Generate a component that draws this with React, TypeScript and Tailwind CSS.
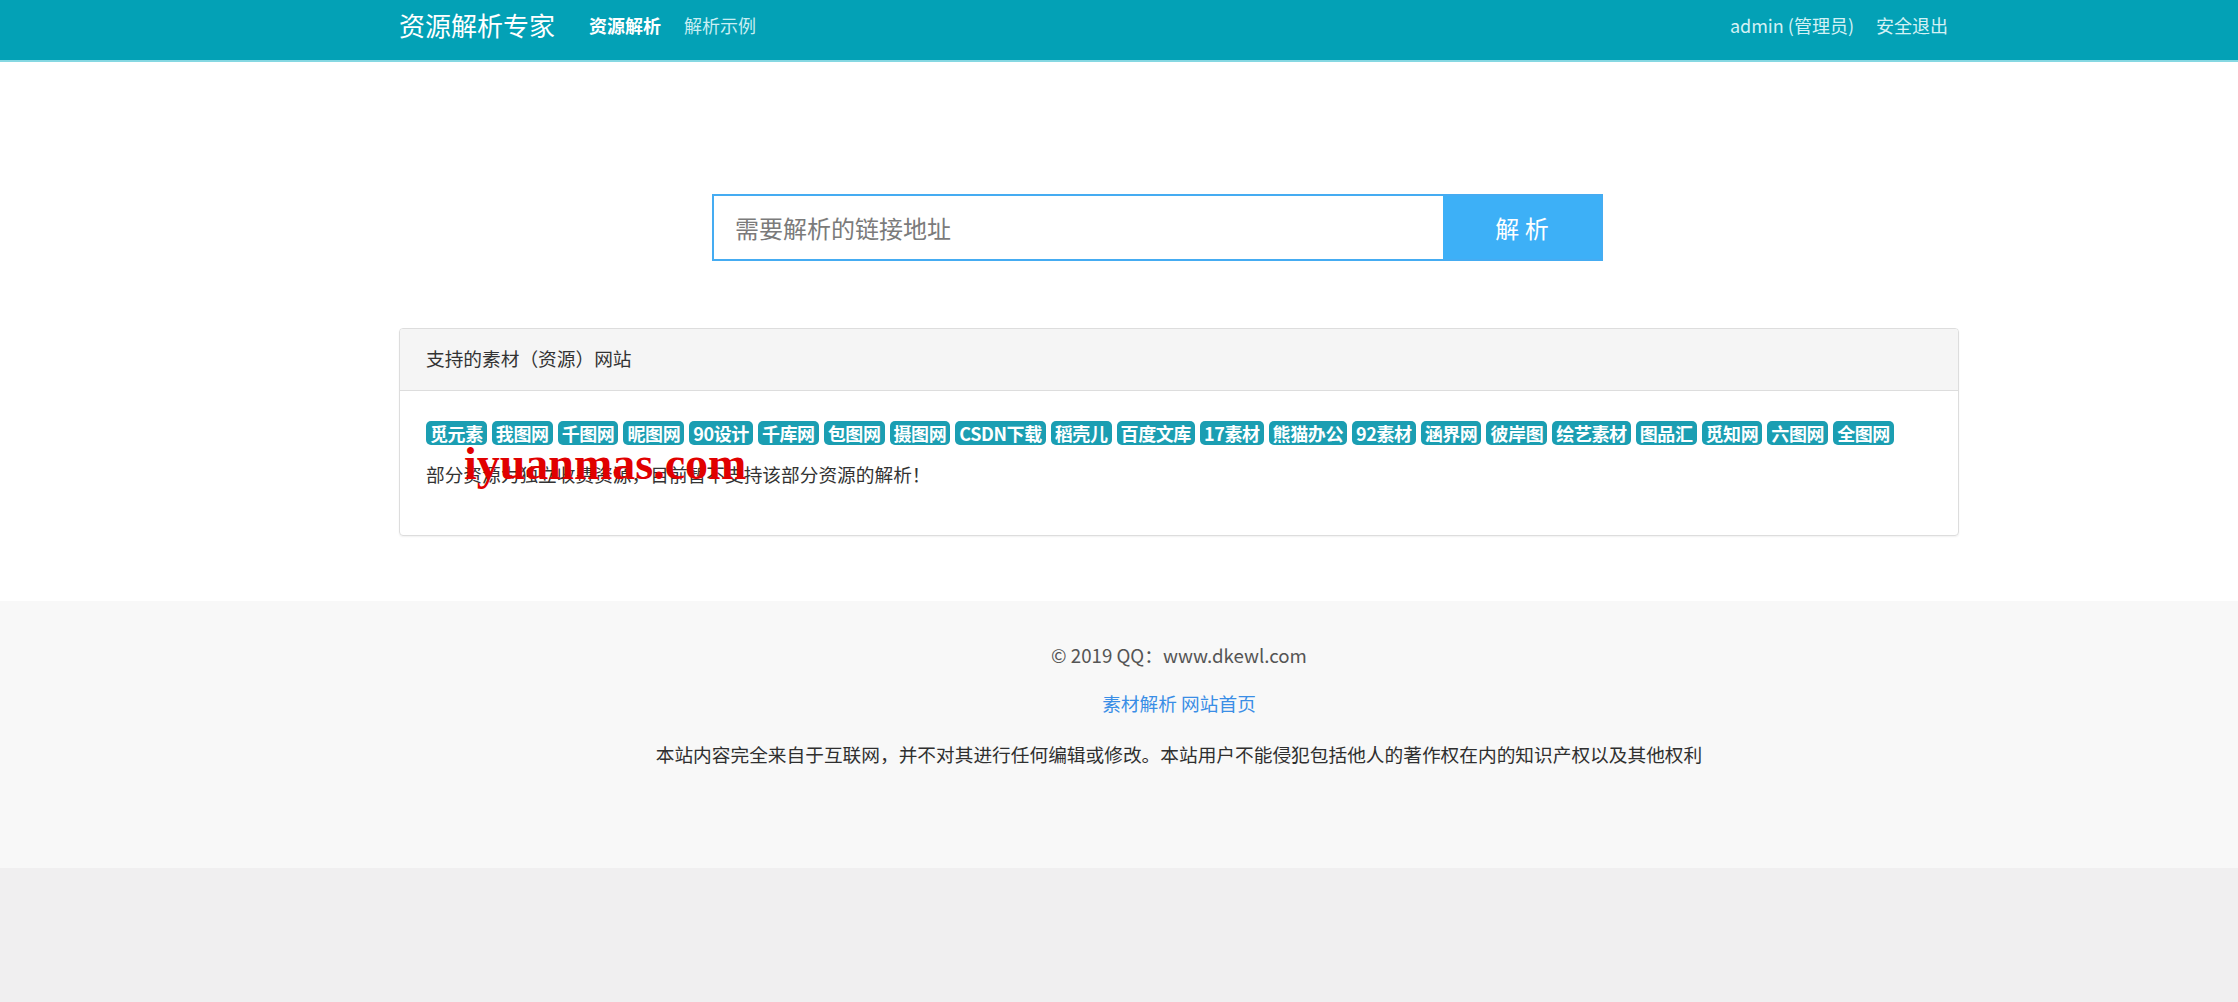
import { useState } from 'react'

const sites = [
  '觅元素', '我图网', '千图网', '昵图网', '90设计', '千库网', '包图网', '摄图网', 'CSDN下载', '稻壳儿', '百度文库',
  '17素材', '熊猫办公', '92素材', '涵界网', '彼岸图', '绘艺素材', '图品汇', '觅知网', '六图网', '全图网',
]

const font = { fontFamily: '"Noto Sans CJK SC", "Noto Sans", sans-serif' }

export default function App() {
  const [url, setUrl] = useState('')

  return (
    <div className="min-h-screen bg-[#f0eff0] text-[#333]" style={font}>
      {/* header */}
      <div className="h-[62px] bg-[#03a1b6] border-b-2 border-[#86d8e2]">
        <div className="w-[1560px] ml-[399px] h-[60px] flex items-center justify-between pb-[10px] pr-[11px]">
          <div className="flex items-center">
            <span className="text-[26px] leading-none text-white">资源解析专家</span>
            <nav className="flex items-center gap-[23px] ml-[34px] text-[18px] leading-none">
              <a className="text-white font-bold">资源解析</a>
              <a className="text-[#c8eef3]">解析示例</a>
            </nav>
          </div>
          <div className="flex items-center gap-[22px] text-[18px] leading-none text-[#d4f1f5]">
            <span>admin (管理员)</span>
            <a>安全退出</a>
          </div>
        </div>
      </div>

      {/* main */}
      <div className="bg-white pt-[132px] pb-[65px]">
        <div className="w-[1560px] ml-[399px]">
          <div className="ml-[313px] w-[891px] h-[67px] flex border-2 border-[#45acf2]">
            <input
              value={url}
              onChange={(e) => setUrl(e.target.value)}
              placeholder="需要解析的链接地址"
              className="flex-1 min-w-0 pl-[21px] text-[24px] outline-none bg-white placeholder:text-[#7b7b7b]"
            />
            <button className="w-[158px] bg-[#3db0f7] text-white text-[24px]">解 析</button>
          </div>

          <div className="mt-[67px] border border-[#ddd] rounded-[4px] shadow-[0_1px_2px_rgba(0,0,0,0.06)] overflow-hidden">
            <div className="h-[62px] bg-[#f5f5f5] border-b border-[#ddd] flex items-center pl-[26px] pb-[2px] text-[18.7px]">
              支持的素材（资源）网站
            </div>
            <div className="relative pt-[30px] pb-[48px] px-[26px]">
              <div className="flex flex-wrap gap-[5px]">
                {sites.map((s) => (
                  <span
                    key={s}
                    className="h-[24px] px-[4px] rounded-[5px] bg-[#1b9eb2] text-white font-bold text-[18px] leading-[24px] tracking-[-0.4px]"
                  >
                    {s}
                  </span>
                ))}
              </div>
              <p className="mt-[16px] text-[18.7px] leading-[26px]">部分资源为独立收费资源，目前暂不支持该部分资源的解析！</p>
              <span
                className="absolute left-[64px] top-[50px] text-[46px] leading-none font-bold text-[#e10000]"
                style={{ fontFamily: '"Liberation Serif", serif' }}
              >
                iyuanmas.com
              </span>
            </div>
          </div>
        </div>
      </div>

      {/* footer */}
      <div className="h-[267px] bg-[#f8f8f8] flex flex-col items-center pt-[40px] text-[18.7px] leading-[28px]">
        <p className="ml-[120px] text-[#555]">© 2019 QQ：www.dkewl.com</p>
        <p className="ml-[120px] mt-[20px] text-[#3a8ee6]">素材解析 网站首页</p>
        <p className="ml-[120px] mt-[23px] text-[#2f2f2f]">本站内容完全来自于互联网，并不对其进行任何编辑或修改。本站用户不能侵犯包括他人的著作权在内的知识产权以及其他权利</p>
      </div>
    </div>
  )
}
